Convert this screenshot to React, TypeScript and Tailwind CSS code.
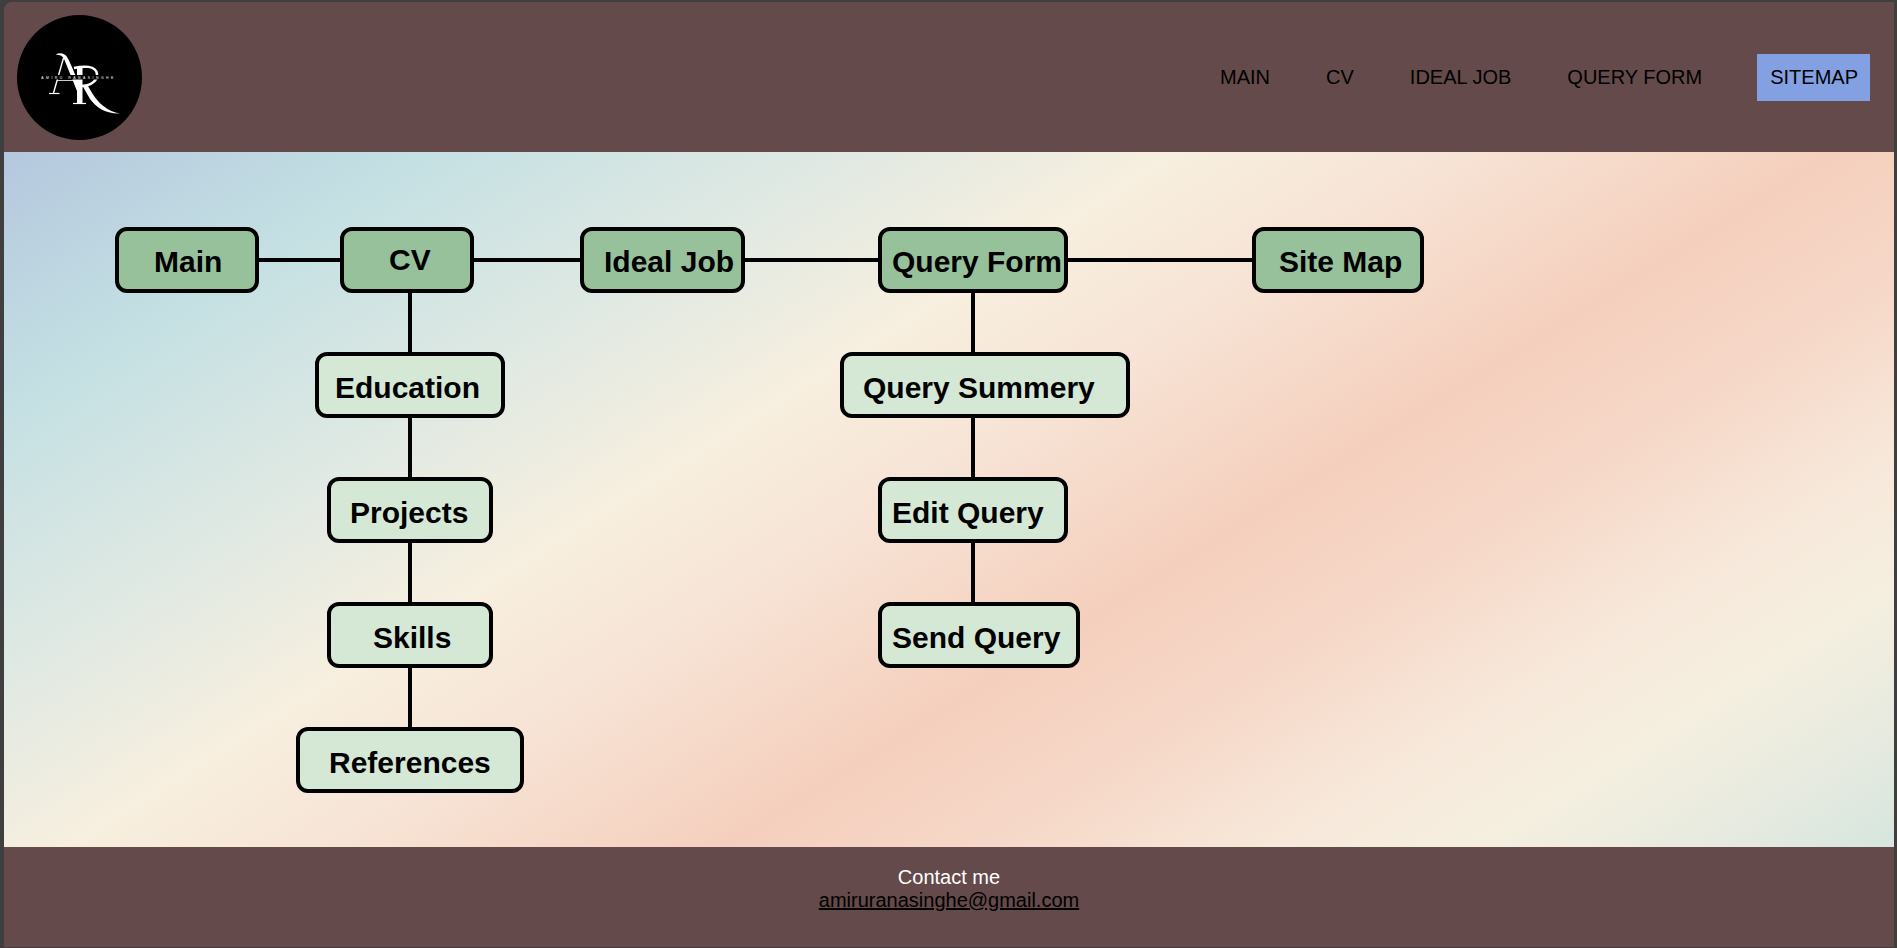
const links = ["MAIN", "CV", "IDEAL JOB", "QUERY FORM"]

const nodes = [
	{label: "Main", cls: "left-[111px] top-[75px] w-[144px] pl-[35px] pt-[3px] bg-[#97c19a]"},
	{label: "CV", cls: "left-[336px] top-[75px] w-[134px] pl-[45px] pb-[2px] bg-[#97c19a]"},
	{label: "Ideal Job", cls: "left-[576px] top-[75px] w-[165px] pl-[20px] pt-[3px] bg-[#97c19a]"},
	{label: "Query Form", cls: "left-[874px] top-[75px] w-[190px] pl-[10px] pt-[3px] bg-[#97c19a]"},
	{label: "Site Map", cls: "left-[1248px] top-[75px] w-[172px] pl-[23px] pt-[3px] bg-[#97c19a]"},
	{label: "Education", cls: "left-[311px] top-[200px] w-[190px] pl-[16px] pt-[4px] bg-[#d5e8d6]"},
	{label: "Projects", cls: "left-[323px] top-[325px] w-[166px] pl-[19px] pt-[5px] bg-[#d5e8d6]"},
	{label: "Skills", cls: "left-[323px] top-[450px] w-[166px] pl-[42px] pt-[4px] bg-[#d5e8d6]"},
	{label: "References", cls: "left-[292px] top-[575px] w-[228px] pl-[29px] pt-[5px] bg-[#d5e8d6]"},
	{label: "Query Summery", cls: "left-[836px] top-[200px] w-[290px] pl-[19px] pt-[4px] bg-[#d5e8d6]"},
	{label: "Edit Query", cls: "left-[874px] top-[325px] w-[190px] pl-[10px] pt-[5px] bg-[#d5e8d6]"},
	{label: "Send Query", cls: "left-[874px] top-[450px] w-[202px] pl-[10px] pt-[4px] bg-[#d5e8d6]"},
]

function Logo() {
	return (
		<div className="h-[125px] w-[125px] shrink-0 rounded-full bg-black">
			<svg viewBox="0 0 125 125" className="h-full w-full" fill="white">
				{/* A */}
				<path d="M46.5 43 L36.5 78" stroke="white" strokeWidth="1.4" />
				<path d="M32 78.5 H42.5" stroke="white" strokeWidth="1.2" />
				<path d="M38.5 39.5 C43 37.5 47.5 38 50 42 C52 45 53 48 54.5 51 L65 76 L60 76 L47.5 45 C46 41 43 39.8 38.5 39.5 Z" />
				<path d="M40 65.5 H60" stroke="white" strokeWidth="0.8" />
				{/* R */}
				<rect x="60" y="53" width="5.5" height="35" />
				<path d="M56 88.5 H69" stroke="white" strokeWidth="1.2" />
				<path d="M57 53 C66 51 79 50 80 59 C80.5 67 72 71 64 71" fill="none" stroke="white" strokeWidth="2.5" />
				<path d="M65 70 L70.5 70 C76 80 84 95 103 98.5 C88 99 79 92 73 84 Z" />
				<rect x="23" y="60" width="74.5" height="4.5" fill="black" />
				<text x="24.3" y="63.6" fontFamily="'Liberation Sans', sans-serif" fontSize="3.4" textLength="72">AMIRU RANASINGHE</text>
			</svg>
		</div>
	)
}

export default function App() {
	return (
		<div className="flex h-screen flex-col bg-[#3f3f3f] pl-1 pr-[3px] pt-0.5 pb-px font-['Liberation_Sans',Arial,sans-serif]">
			<header className="flex h-[150px] shrink-0 items-center justify-between rounded-tl-lg bg-[#644a4a] pl-[13px] pr-[24px]">
				<Logo />
				<nav className="flex items-center gap-14 text-[20px] leading-[23px] text-black">
					{links.map((link) => (
						<a key={link} href="#">{link}</a>
					))}
					<a href="#" className="-ml-px bg-[#83a0e3] pl-[13px] pr-[12px] py-3">SITEMAP</a>
				</nav>
			</header>

			<main className="relative flex-1 bg-[linear-gradient(148deg,#b4c8de_0%,#c4e0e3_14%,#e0e9e3_28%,#f7efdf_39%,#f7e4d6_48%,#f5cfbd_61%,#f6d8c8_70%,#f7e8da_79%,#f5efdf_86%,#e6eae0_94%,#d5e6de_100%)]">
				{/* connectors */}
				<div className="absolute left-[255px] top-[106px] h-1 w-[994px] bg-black" />
				<div className="absolute left-[404px] top-[141px] h-[434px] w-1 bg-black" />
				<div className="absolute left-[967px] top-[141px] h-[310px] w-1 bg-black" />

				{nodes.map((node) => (
					<div
						key={node.label}
						className={`absolute flex h-[66px] items-center rounded-xl border-4 border-black text-[30px] font-bold whitespace-nowrap text-black ${node.cls}`}
					>
						{node.label}
					</div>
				))}
			</main>

			<footer className="h-[100px] shrink-0 bg-[#644a4a] pt-[19px] text-center text-[20px] leading-[23px] text-white">
				<p>Contact me</p>
				<a href="#" className="text-black underline">amiruranasinghe@gmail.com</a>
			</footer>
		</div>
	)
}
